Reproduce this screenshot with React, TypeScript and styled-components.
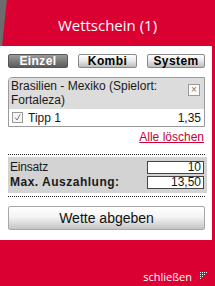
import React from "react";
import styled, { createGlobalStyle } from "styled-components";

const RED = "#da0032";

const Global = createGlobalStyle`
  html, body { margin: 0; padding: 0; background: ${RED}; }
  body { width: 215px; height: 286px; overflow: hidden; font-family: "Liberation Sans", Arial, sans-serif; }
`;

const Frame = styled.div`
  width: 215px;
  height: 286px;
  display: flex;
  flex-direction: column;
  background: ${RED};
`;

const Header = styled.div`
  height: 46px;
  display: flex;
  align-items: center;
  justify-content: center;
  background: linear-gradient(96deg, #6c6c6c 6.3px, ${RED} 7.3px);
  color: #fff;
  font-family: "Open Sans", sans-serif;
  font-size: 15px;
  padding-top: 3px;
  box-sizing: border-box;
`;

const Panel = styled.div`
  width: 212px;
  height: 194px;
  background: #fff;
  box-sizing: border-box;
  padding: 8px 7px 0 8px;
  display: flex;
  flex-direction: column;
  color: #1a1a1a;
  font-size: 12px;
`;

const Tabs = styled.div`
  display: grid;
  grid-template-columns: 60px 59px 58px;
  column-gap: 10px;
  width: 197px;
`;

const Tab = styled.div<{ $active?: boolean }>`
  height: 14px;
  box-sizing: border-box;
  border-radius: 2px;
  border: 1px solid ${(p) => (p.$active ? "#555" : "#8a8a8a")};
  background: ${(p) =>
    p.$active
      ? "linear-gradient(#9a9a9a, #5c5c5c)"
      : "linear-gradient(#ffffff, #e6e6e6 50%, #bdbdbd)"};
  color: ${(p) => (p.$active ? "#fff" : "#000")};
  font-weight: bold;
  font-size: 12px;
  line-height: 12px;
  letter-spacing: 0.4px;
  text-align: center;
`;

const EventBox = styled.div`
  margin-top: 9px;
  border: 1px solid #9a9a9a;
  border-top-left-radius: 4px;
  width: 197px;
  box-sizing: border-box;
`;

const EventHead = styled.div`
  background: #dcdcdc;
  display: flex;
  justify-content: space-between;
  align-items: flex-start;
  padding: 1px 4px 2px 2px;
  line-height: 14px;
  border-top-left-radius: 3px;
`;

const CloseBox = styled.div`
  width: 10px;
  height: 10px;
  margin-top: 5px;
  border: 1px solid #9a9a9a;
  background: #fafafa;
  color: #777;
  font-size: 10px;
  line-height: 9px;
  text-align: center;
  flex-shrink: 0;
`;

const TipRow = styled.div`
  height: 17px;
  display: flex;
  align-items: center;
  padding: 0 3px 0 3px;
  background: #fff;
`;

const Check = styled.div`
  width: 9px;
  height: 9px;
  border: 1px solid #9a9a9a;
  background: #f6f6f6;
  display: flex;
  align-items: center;
  justify-content: center;
  margin-right: 5px;
`;

const Odds = styled.span`
  margin-left: auto;
`;

const ClearLink = styled.a`
  align-self: flex-end;
  margin-top: 3px;
  margin-right: 1px;
  color: #c8003a;
  text-decoration: underline;
  line-height: 14px;
`;

const Dotted = styled.div<{ $top?: number }>`
  width: 197px;
  margin-top: ${(p) => p.$top ?? 0}px;
  border-top: 1px dotted #222;
`;

const StakeBox = styled.div`
  margin: 2px 0 3px;
  width: 199px;
  background: #d3d3d3;
  padding: 4px 3px 4px 2px;
  box-sizing: border-box;
  display: grid;
  grid-template-columns: 1fr 57px;
  row-gap: 2px;
  align-items: center;
`;

const Label = styled.span<{ $bold?: boolean }>`
  font-weight: ${(p) => (p.$bold ? "bold" : "normal")};
  letter-spacing: ${(p) => (p.$bold ? "0.5px" : "-0.2px")};
  line-height: 13px;
`;

const Field = styled.div`
  height: 13px;
  box-sizing: border-box;
  border: 1px solid #444;
  background: #fff;
  text-align: right;
  padding-right: 2px;
  line-height: 11px;
  font-size: 12px;
`;

const Submit = styled.div`
  margin-top: 9px;
  width: 197px;
  height: 24px;
  box-sizing: border-box;
  border: 1px solid #a8a8a8;
  border-radius: 2px;
  background: linear-gradient(#ffffff, #f4f4f4 45%, #c4c4c4);
  font-size: 14px;
  text-align: center;
  line-height: 22px;
  color: #111;
`;

const Footer = styled.div`
  flex: 1;
  display: flex;
  align-items: flex-end;
  justify-content: flex-end;
  padding: 0 7px 2px 0;
  gap: 7px;
  color: #fff;
  font-family: "Open Sans", sans-serif;
  font-size: 11px;
`;

const GripSvg = styled.svg`
  margin-bottom: 4px;
`;

const Grip = () => (
  <GripSvg width="9" height="9" viewBox="0 0 9 9">
    {[0, 1, 2, 3].flatMap((r) =>
      [0, 1, 2, 3]
        .filter((c) => r + c <= 3)
        .map((c) => (
          <rect key={`${r}-${c}`} x={c * 2 + 1} y={r * 2 + 1} width="1" height="1" fill="#fff" />
        ))
    )}
  </GripSvg>
);

export default function App() {
  return (
    <Frame>
      <Global />
      <Header>Wettschein (1)</Header>
      <Panel>
        <Tabs>
          <Tab $active>Einzel</Tab>
          <Tab>Kombi</Tab>
          <Tab>System</Tab>
        </Tabs>
        <EventBox>
          <EventHead>
            <span>Brasilien - Mexiko (Spielort: Fortaleza)</span>
            <CloseBox>×</CloseBox>
          </EventHead>
          <TipRow>
            <Check>
              <svg width="7" height="7" viewBox="0 0 7 7">
                <path d="M1 3.5 L3 6 L6 0.5" stroke="#777" strokeWidth="1" fill="none" />
              </svg>
            </Check>
            <span>Tipp 1</span>
            <Odds>1,35</Odds>
          </TipRow>
        </EventBox>
        <ClearLink>Alle löschen</ClearLink>
        <Dotted $top={10} />
        <StakeBox>
          <Label>Einsatz</Label>
          <Field>10</Field>
          <Label $bold>Max. Auszahlung:</Label>
          <Field>13,50</Field>
        </StakeBox>
        <Dotted />
        <Submit>Wette abgeben</Submit>
      </Panel>
      <Footer>
        <span>schließen</span>
        <Grip />
      </Footer>
    </Frame>
  );
}
